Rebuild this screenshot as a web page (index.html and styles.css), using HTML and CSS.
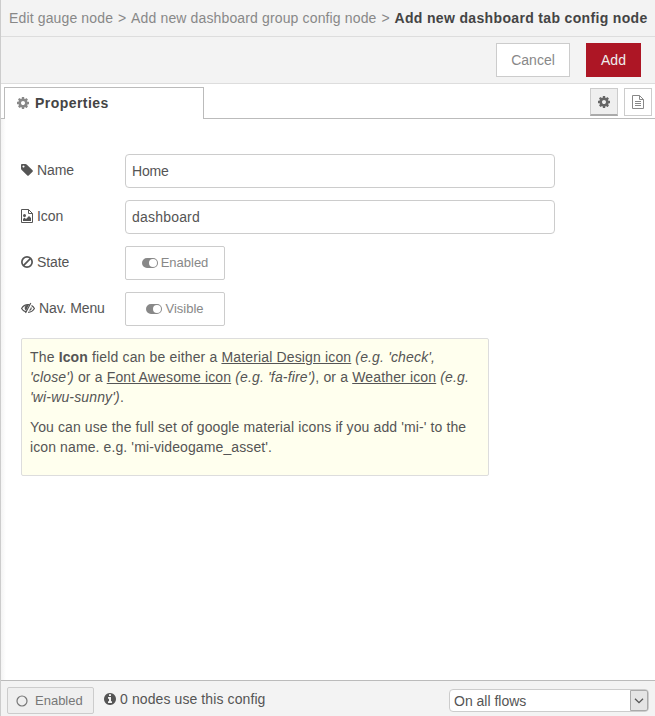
FILE: index.html
```html
<!DOCTYPE html>
<html lang="en">
<head>
<meta charset="utf-8">
<title>Add new dashboard tab config node</title>
<link rel="stylesheet" href="styles.css">
</head>
<body>
<svg class="sprite" aria-hidden="true">
  <symbol id="cog" viewBox="128 0 1536 1792"><path d="M1152 896q0-106-75-181t-181-75-181 75-75 181 75 181 181 75 181-75 75-181zm512-109v222q0 12-8 23t-20 13l-185 28q-19 54-39 91 35 50 107 138 10 12 10 25t-9 23q-27 37-99 108t-94 71q-12 0-26-9l-138-108q-44 23-91 38-16 136-29 186-7 28-36 28h-222q-14 0-24.500-8.500t-11.500-21.500l-28-184q-49-16-90-37l-141 107q-10 9-25 9-14 0-25-11-126-114-165-168-7-10-7-23 0-12 8-23 15-21 51-66.500t54-70.500q-27-50-41-99l-183-27q-13-2-21-12.500t-8-23.500v-222q0-12 8-23t19-13l186-28q14-46 39-92-40-57-107-138-10-12-10-24 0-10 9-23 26-36 98.500-107.500t94.500-71.500q13 0 26 10l138 107q44-23 91-38 16-136 29-186 7-28 36-28h222q14 0 24.500 8.500t11.500 21.500l28 184q49 16 90 37l142-107q9-9 24-9 13 0 25 10 129 119 165 170 7 8 7 22 0 12-8 23-15 21-51 66.500t-54 70.500q26 50 41 98l183 28q13 2 21 12.500t8 23.500z"/></symbol>
</svg>
<div class="tray">
  <header class="breadcrumbs">
    <span class="crumb-a">Edit gauge node</span><span class="sep">&gt;</span><span class="crumb-b">Add new dashboard group config node</span><span class="sep">&gt;</span><b class="crumb-c">Add new dashboard tab config node</b>
  </header>
  <div class="toolbar">
    <button class="btn cancel">Cancel</button>
    <button class="btn primary">Add</button>
  </div>
  <nav class="tabs">
    <div class="tab"><svg class="icon" width="12" height="14"><use href="#cog"/></svg><b>Properties</b></div>
    <div class="tab-rest">
      <button class="tab-button selected"><svg class="icon" width="12" height="14"><use href="#cog"/></svg></button>
      <button class="tab-button"><svg class="icon" width="12" height="14" viewBox="0 0 12 14"><path fill="none" stroke="currentColor" d="M.5.5h7l4 4v9H.500zM7.500.5v4h4M3 6.500h6M3 8.500h6M3 10.500h6"/></svg></button>
    </div>
  </nav>
  <main class="form">
    <div class="row">
      <label><svg class="icon" width="12" height="14" viewBox="128 0 1536 1792"><path d="M576 448q0-53-37.500-90.500t-90.500-37.500-90.500 37.500-37.500 90.500 37.500 90.500 90.500 37.500 90.500-37.500 37.500-90.500zm1067 576q0 53-37 90l-491 492q-39 37-91 37-53 0-90-37l-715-716q-38-37-64.500-101t-26.500-117v-416q0-52 38-90t90-38h416q53 0 117 26.500t102 64.500l715 714q37 39 37 91z"/></svg>Name</label>
      <input class="name" type="text" value="Home">
    </div>
    <div class="row">
      <label><svg class="icon" width="12" height="14" viewBox="0 0 12 14"><path fill="none" stroke="currentColor" d="M.5.5h7l4 4v9H.500zM7.500.5v4h4"/><circle cx="3.500" cy="6.500" r="1.500"/><path d="M2 12v-2l1.500-1.500L5 10l3-3 2 2v3z"/></svg>Icon</label>
      <input class="icon-name" type="text" value="dashboard">
    </div>
    <div class="row">
      <label><svg class="icon" width="12" height="14" viewBox="0 0 12 14"><g fill="none" stroke="currentColor" stroke-width="1.700"><circle cx="6" cy="7" r="5.150"/><path d="M2.400 10.600l7.200-7.200"/></g></svg>State</label>
      <button class="btn toggle"><svg class="icon" width="16" height="10" viewBox="0 0 16 10"><path fill-rule="evenodd" d="M5 0h6a5 5 0 0 1 0 10H5A5 5 0 0 1 5 0zm6 1a4 4 0 1 0 0 8 4 4 0 0 0 0-8z"/></svg>Enabled</button>
    </div>
    <div class="row">
      <label><svg class="icon" width="14" height="14" viewBox="0 0 14 14"><path fill="none" stroke="currentColor" stroke-width="1.200" d="M5.300 11.200C3.300 10.700 1.600 9.300.6 7.500 2 5 4.300 3.600 7 3.600l1.200.1M10.500 4.600c1.200.7 2.200 1.700 2.900 2.900-1.400 2.400-3.700 3.800-6.300 3.900M9.800 2L4.500 12M10.200 6.500c.1 1.400-.7 2.500-1.700 3"/><path d="M7.800 3.800C5.300 3.500 3.700 4.800 3.700 7c0 1.200.5 2.100 1.400 2.700z"/></svg>Nav. Menu</label>
      <button class="btn toggle"><svg class="icon" width="16" height="10" viewBox="0 0 16 10"><path fill-rule="evenodd" d="M5 0h6a5 5 0 0 1 0 10H5A5 5 0 0 1 5 0zm6 1a4 4 0 1 0 0 8 4 4 0 0 0 0-8z"/></svg>Visible</button>
    </div>
    <div class="tips">
      <p class="formats">The <b>Icon</b> field can be either a <a>Material Design icon</a> <i>(e.g. 'check',<br>'close')</i> or a <a>Font Awesome icon</a> <i>(e.g. 'fa-fire')</i>, or a <a>Weather icon</a> <i>(e.g.<br>'wi-wu-sunny')</i>.</p>
      <p>You can use the full set of google material icons if you add 'mi-' to the<br>icon name. e.g. 'mi-videogame_asset'.</p>
    </div>
  </main>
  <footer class="footer">
    <button class="btn state"><svg class="icon" width="12" height="12" viewBox="0 0 12 12"><circle cx="6" cy="6" r="5" fill="none" stroke="currentColor" stroke-width="1.200"/></svg>Enabled</button>
    <span class="users"><svg class="icon" width="12" height="14" viewBox="128 0 1536 1792"><path d="M1152 1376v-160q0-14-9-23t-23-9h-96v-512q0-14-9-23t-23-9h-320q-14 0-23 9t-9 23v160q0 14 9 23t23 9h96v320h-96q-14 0-23 9t-9 23v160q0 14 9 23t23 9h448q14 0 23-9t9-23zm-128-896v-160q0-14-9-23t-23-9h-192q-14 0-23 9t-9 23v160q0 14 9 23t23 9h192q14 0 23-9t9-23zm640 416q0 209-103 385.500t-279.500 279.500-385.500 103-385.500-103-279.500-279.500-103-385.500 103-385.500 279.500-279.500 385.500-103 385.500 103 279.500 279.500 103 385.500z"/></svg>0 nodes use this config</span>
    <div class="select"><span>On all flows</span><span class="arrow"><svg width="10" height="6" viewBox="0 0 10 6"><path fill="none" stroke="#555" stroke-width="1.300" d="M1 .7l4 4 4-4"/></svg></span></div>
  </footer>
</div>
</body>
</html>
```
FILE: styles.css
```css
* { box-sizing: border-box; }
body { margin: 0; font: 14px/20px "Liberation Sans", Arial, sans-serif; color: #555; background: #fff; }
.sprite { display: none; }
.icon { display: block; flex: none; fill: currentColor; }
.tray { display: flex; flex-direction: column; width: 655px; height: 716px; border-left: 1px solid #ccc; overflow: hidden; white-space: nowrap; }
.breadcrumbs { display: flex; height: 37px; padding: 8px 0 0 8px; background: #f3f3f3; border-bottom: 1px solid #ddd; color: #888; }
.crumb-a, .crumb-b { letter-spacing: .14px; }
.sep { width: 18px; text-align: center; }
.crumb-c { color: #444; letter-spacing: .34px; }
.toolbar { display: flex; justify-content: flex-end; gap: 16px; height: 47px; padding: 6px 14px 0 0; background: #f3f3f3; border-bottom: 1px solid #ddd; }
.btn { display: flex; align-items: center; justify-content: center; height: 34px; padding: 0; border: 1px solid #ccc; background: #fff; color: #888; font: inherit; }
.cancel { width: 74px; }
.primary { width: 55px; background: #ad1625; border-color: #ad1625; color: #eee; }
.tabs { display: flex; height: 35px; padding-left: 3px; background: linear-gradient(#bbb, #bbb) 0 100% / 3px 1px no-repeat; }
.tab { display: flex; align-items: center; gap: 6px; width: 200px; margin-top: 3px; padding: 0 0 2px 12px; border: 1px solid #bbb; border-bottom: 0; color: #444; letter-spacing: .45px; }
.tab .icon { color: #888; }
.tab-rest { display: flex; flex: 1; justify-content: flex-end; gap: 6px; padding: 4px 3px 0 0; border-bottom: 1px solid #bbb; }
.tab-button { display: flex; align-items: center; justify-content: center; width: 28px; height: 28px; padding: 0; border: 1px solid #ccc; background: #fff; color: #888; }
.tab-button.selected { background: #efefef; color: #666; border-bottom: 2px solid #aaa; }
.form { flex: 1; padding: 35px 20px 0; background: linear-gradient(90deg, #f4f4f4, #fff 5px); }
.row { display: flex; height: 34px; margin-bottom: 12px; }
label { display: flex; align-items: center; gap: 4px; width: 104px; height: 32px; letter-spacing: -.1px; }
input { width: 430px; height: 34px; padding: 0 6px; border: 1px solid #ccc; border-radius: 4px; color: #555; font: inherit; }
.name { letter-spacing: -.2px; }
.icon-name { letter-spacing: .2px; }
.toggle { width: 100px; gap: 3px; border-radius: 2px; font-size: 13px; }
.tips { width: 468px; height: 138px; padding: 8px; border: 1px solid #ddd; border-radius: 2px; background: #ffe; letter-spacing: .11px; }
.tips p { margin: 0 0 10px; }
.formats { letter-spacing: .15px; }
.tips a { text-decoration: underline; }
.footer { display: flex; height: 36px; padding: 6px 6px 0 6px; border-top: 1px solid #bbb; background: #f3f3f3; }
.state { justify-content: flex-start; width: 87px; height: 27px; padding-left: 8px; gap: 7px; background: #efefef; color: #777; font-size: 13px; border-radius: 2px; }
.users { display: flex; align-items: center; gap: 4px; height: 24px; margin-left: 10px; letter-spacing: .1px; }
.select { display: flex; align-items: center; justify-content: space-between; width: 200px; height: 23px; margin: 2px 0 0 auto; padding-left: 4px; border: 1px solid #ccc; border-radius: 4px; background: #fff; }
.arrow { display: flex; align-items: center; justify-content: center; width: 18px; height: 21px; border: 1px solid #aaa; background: #e5e5e5; border-radius: 0 2px 2px 0; }
```
